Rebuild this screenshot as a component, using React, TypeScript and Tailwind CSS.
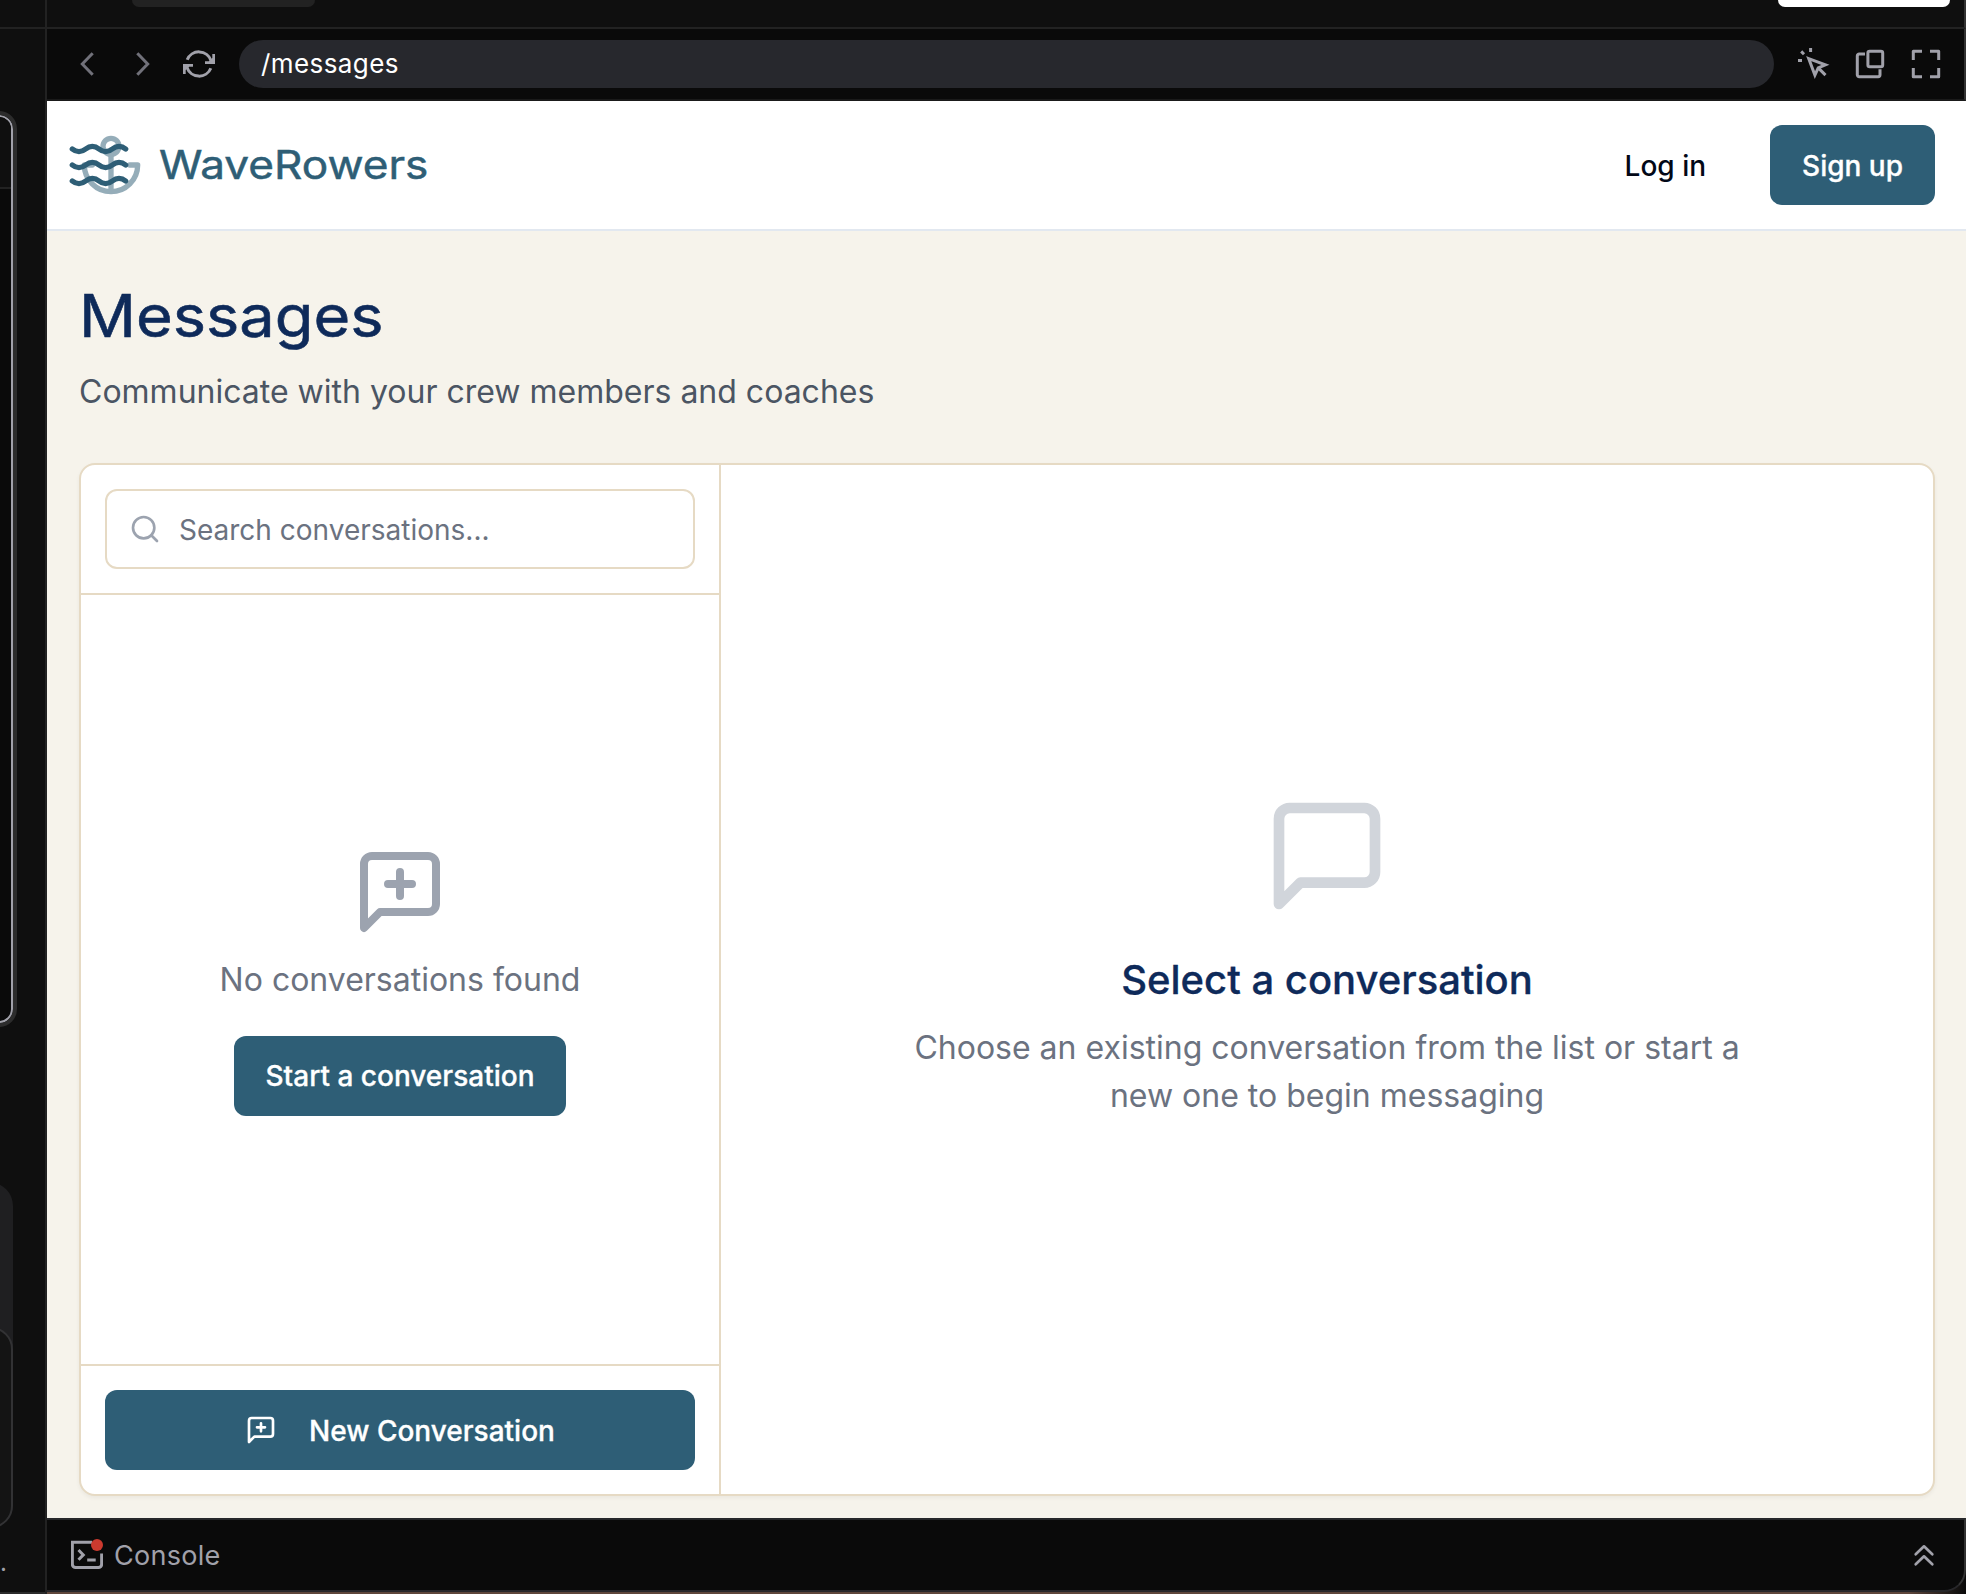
import type { ReactNode } from "react";

type IconProps = { className?: string };

const SQUARE_BUBBLE = "M21 15a2 2 0 0 1-2 2H7l-4 4V5a2 2 0 0 1 2-2h14a2 2 0 0 1 2 2z";

function LineIcon({ children, className = "" }: { children: ReactNode; className?: string }) {
  return (
    <svg viewBox="0 0 24 24" fill="none" stroke="currentColor" strokeWidth="2" strokeLinecap="round" strokeLinejoin="round" className={"shrink-0 " + className}>
      {children}
    </svg>
  );
}

function ChromeIcon({ children, className = "" }: { children: ReactNode; className?: string }) {
  return (
    <svg viewBox="0 0 32 32" fill="none" stroke="currentColor" strokeWidth="3" className={"size-8 shrink-0 " + className}>
      {children}
    </svg>
  );
}

function MessageIcon({ className }: IconProps) {
  return (
    <LineIcon className={className}>
      <path d={SQUARE_BUBBLE} />
    </LineIcon>
  );
}

function MessagePlusIcon({ className }: IconProps) {
  return (
    <LineIcon className={className}>
      <path d={SQUARE_BUBBLE} />
      <path d="M12 7v6M9 10h6" />
    </LineIcon>
  );
}

function Logo() {
  return (
    <svg viewBox="0 0 28.5 24" fill="none" stroke="#2e5e76" strokeWidth="2" strokeLinecap="round" strokeLinejoin="round" className="h-16 w-[76px] shrink-0">
      <path d="M2 6c.6.5 1.2 1 2.5 1C7 7 7 5 9.500 5c2.600 0 2.400 2 5 2 2.500 0 2.500-2 5-2 1.300 0 1.900.5 2.500 1" />
      <path d="M2 12c.6.5 1.2 1 2.5 1 2.500 0 2.500-2 5-2 2.600 0 2.400 2 5 2 2.500 0 2.500-2 5-2 1.300 0 1.900.5 2.500 1" />
      <path d="M2 18c.6.5 1.2 1 2.5 1 2.500 0 2.500-2 5-2 2.600 0 2.400 2 5 2 2.500 0 2.500-2 5-2 1.300 0 1.900.5 2.500 1" />
      <g transform="translate(4.5 0)" opacity="0.5">
        <path d="M12 22V8M5 12H2a10 10 0 0 0 20 0h-3" />
        <circle cx="12" cy="5" r="3" />
      </g>
    </svg>
  );
}

function PrimaryButton({ children, className = "" }: { children: ReactNode; className?: string }) {
  return (
    <button className={"flex h-20 items-center justify-center rounded-[12px] bg-[#2e5e76] px-8 text-[28px] font-medium leading-10 text-white [-webkit-text-stroke:0.3px] " + className}>
      {children}
    </button>
  );
}

/* Right edge of the chat column; its boxes start beyond the left side of the window. */
function ChatEdge() {
  return (
    <aside className="flex w-[47px] shrink-0 flex-col overflow-hidden border-r-2 border-[#222222] bg-[#0f0f0f]">
      <div className="h-[29px] shrink-0 border-b-2 border-[#222222]" />
      <div className="-ml-10 mt-[86px] flex h-[908px] w-[53px] shrink-0 flex-col overflow-hidden rounded-[14px] border-2 border-[#a1a1aa] bg-[#0a0a0a] outline-4 outline-[#2c2c2c]">
        <div className="h-[72px] border-b-2 border-[#222222] bg-[#0f0f0f]" />
      </div>
      <div className="-ml-10 mt-[159px] flex h-[346px] w-[53px] shrink-0 flex-col justify-end rounded-[24px] bg-[#1f1f21]">
        <div className="h-[201px] rounded-[22px] border-2 border-[#323234] bg-[#141414]" />
      </div>
      <p className="mt-[21px] w-fit text-[24px] leading-[28px] text-[#a1a1aa]">.</p>
      <div className="mt-auto h-0.5 bg-[#2a2a2a]" />
    </aside>
  );
}

function TopBar() {
  return (
    <div className="flex h-[29px] shrink-0 items-start justify-between border-b-2 border-r-2 border-b-[#222222] border-r-[#333333] bg-[#0f0f0f] pl-[85px] pr-[14px]">
      <div className="h-[7px] w-[183px] rounded-b-[12px] bg-[#222222]" />
      <div className="h-[7px] w-[172px] rounded-b-[12px] bg-white" />
    </div>
  );
}

function AddressBar() {
  return (
    <div className="flex h-[72px] shrink-0 items-center gap-6 border-b-2 border-r-2 border-b-[#1a1a1a] border-r-[#333333] bg-[#0a0a0a] pl-6 pr-[22px] text-[#a1a1aa]">
      <ChromeIcon className="text-[#71717a]">
        <path d="M21.700 5.300 11.300 16l10.400 10.700" />
      </ChromeIcon>
      <ChromeIcon className="text-[#71717a]">
        <path d="M10.300 5.300 20.700 16 10.300 26.700" />
      </ChromeIcon>
      <ChromeIcon>
        <path d="M4.200 11.800A12.700 12.700 0 0 1 28 12.500M27.800 20.200A12.700 12.700 0 0 1 4 19.500" />
        <path stroke="none" fill="currentColor" d="M32 6v9.900H22v-2.700h3.800l3.500-3.200V6zM0 26v-9.900h10v2.700H6.200L2.700 22v4z" />
      </ChromeIcon>
      <div className="flex h-12 flex-1 items-center rounded-full bg-[#27282d] pl-[22px] text-[26px] leading-8 tracking-[0.016em] text-white">/messages</div>
      <ChromeIcon>
        <path d="M10.700 10.600 27.400 16.800 20.200 19.800 16.900 27zM20 19.600l7.500 7.500M12.600 0v4M0 12.600h4M3.200 3.400l2.800 2.800" />
      </ChromeIcon>
      <ChromeIcon>
        <rect x="13.900" y="3.300" width="14.800" height="15.400" rx="1.800" />
        <path d="M11 6H5.200a1.900 1.900 0 0 0-1.900 1.900v18.900a1.900 1.900 0 0 0 1.900 1.900h18.900a1.900 1.900 0 0 0 1.900-1.900v-5.500" />
      </ChromeIcon>
      <ChromeIcon>
        <path strokeLinejoin="round" d="M3.300 12V3.300H12M20 3.300h8.700V12M28.700 20v8.700H20M12 28.700H3.300V20" />
      </ChromeIcon>
    </div>
  );
}

function ConsoleBar() {
  return (
    <div className="flex h-[76px] shrink-0 bg-linear-to-r from-[#5e463b] from-97% to-[#0a0a0a] pb-0.5">
      <div className="flex flex-1 items-center rounded-br-[22px] border-y-2 border-r-2 border-y-[#27272a] border-r-[#333333] bg-[#0a0a0a] pl-6 pr-6 text-[#a1a1aa]">
        <ChromeIcon>
          <path d="M21 3.300H1.350v22a3.300 3.300 0 0 0 3.300 3.300h22.700a3.300 3.300 0 0 0 3.300-3.300V14.500M7.500 11l4.800 4.900-4.800 4.900M16.200 21h8.500" />
          <circle cx="26" cy="6" r="6" fill="#cc3a2f" stroke="none" />
        </ChromeIcon>
        <span className="ml-[11px] pt-px text-[27px] leading-8 tracking-[0.01em]">Console</span>
        <ChromeIcon className="ml-auto">
          <path strokeWidth="2.7" strokeLinecap="round" strokeLinejoin="round" d="M7.700 15.200 16 7.300l8.300 7.900M7.700 25.200 16 17.300l8.300 7.900" />
        </ChromeIcon>
      </div>
    </div>
  );
}

function ConversationList() {
  return (
    <section className="flex w-[640px] shrink-0 flex-col border-r-2 border-[#e6dac4]">
      <div className="border-b-2 border-[#e6dac4] p-6">
        <div className="flex h-20 items-center gap-[18px] rounded-[12px] border-2 border-[#e6dac4] pl-[22px] text-[28px] leading-10 text-[#6b7280]">
          <LineIcon className="size-8 text-[#9ca3af]">
            <circle cx="11" cy="11" r="8" />
            <path d="m21 21-4.300-4.300" />
          </LineIcon>
          <span className="pt-0.5">Search conversations...</span>
        </div>
      </div>
      <div className="flex flex-1 flex-col items-center justify-center">
        <MessagePlusIcon className="size-24 text-[#9ca3af]" />
        <p className="mb-8 mt-4 text-[32px] leading-[48px] text-[#6b7280]">No conversations found</p>
        <PrimaryButton>Start a conversation</PrimaryButton>
      </div>
      <div className="border-t-2 border-[#e6dac4] p-6">
        <PrimaryButton className="w-full gap-8">
          <MessagePlusIcon className="size-8" />
          <span className="pt-0.5">New Conversation</span>
        </PrimaryButton>
      </div>
    </section>
  );
}

function MessagesPage() {
  return (
    <div className="flex min-h-0 flex-1 flex-col bg-[#f6f3eb]">
      <header className="flex h-[130px] shrink-0 items-center border-b-2 border-[#e2e8f0] bg-white pl-5 pr-[31px]">
        <Logo />
        <span className="ml-4 inline-block origin-left scale-x-[1.117] text-[39.5px] font-normal leading-[56px] text-[#2e5e76] [-webkit-text-stroke:0.5px]">WaveRowers</span>
        <span className="ml-auto mr-16 pt-0.5 text-[28px] font-medium leading-10 text-[#020817]">Log in</span>
        <PrimaryButton>
          <span className="pt-0.5">Sign up</span>
        </PrimaryButton>
      </header>
      <main className="flex flex-1 flex-col pb-[22px] pl-8 pr-[31px] pt-12">
        <h1 className="w-fit origin-left scale-x-[1.078] pt-px text-[58.5px] font-normal leading-[71px] text-[#0e2a5a] [-webkit-text-stroke:0.6px]">Messages</h1>
        <p className="mb-[47px] mt-[17px] text-[32px] leading-[48px] text-[#4b5563]">Communicate with your crew members and coaches</p>
        <div className="flex flex-1 rounded-[16px] border-2 border-[#e6dac4] bg-white shadow-[0_2px_4px_rgba(0,0,0,0.05)]">
          <ConversationList />
          <section className="flex flex-1 flex-col items-center justify-center pb-[47px] text-center">
            <MessageIcon className="mb-8 size-32 text-[#d1d5db]" />
            <h2 className="mb-[15px] text-[40px] font-medium leading-[56px] text-[#0e2a5a] [-webkit-text-stroke:0.3px]">Select a conversation</h2>
            <p className="w-[896px] pt-px text-[32px] leading-[48px] text-[#6b7280]">Choose an existing conversation from the list or start a new one to begin messaging</p>
          </section>
        </div>
      </main>
    </div>
  );
}

export default function App() {
  return (
    <div className="flex h-[1594px] w-[1966px] overflow-hidden bg-[#0f0f0f] font-['Inter',sans-serif]">
      <ChatEdge />
      <div className="flex min-w-0 flex-1 flex-col">
        <TopBar />
        <AddressBar />
        <MessagesPage />
        <ConsoleBar />
      </div>
    </div>
  );
}
